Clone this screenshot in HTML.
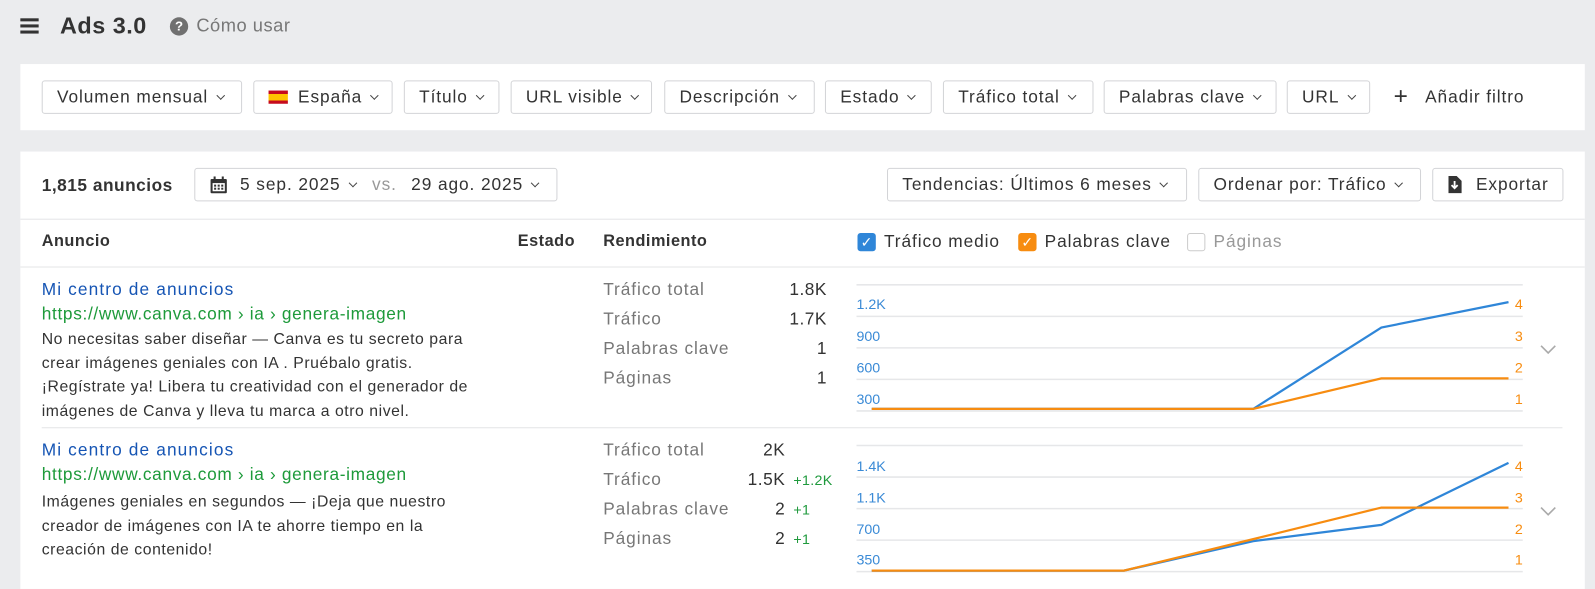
<!DOCTYPE html>
<html><head><meta charset="utf-8"><style>
*{box-sizing:border-box;margin:0;padding:0}
body{width:1595px;height:571px;background:#ebecee;font-family:"Liberation Sans",sans-serif;color:#333;position:relative;overflow:hidden}
#w{position:absolute;left:0;top:0;width:1568px;height:562px;transform:scale(1.0172);transform-origin:0 0}
.a{position:absolute;white-space:nowrap}
.card{position:absolute;background:#fff;left:20px;width:1538px}
.btn{position:absolute;height:33px;border:1px solid #d3d4d7;border-radius:3px;background:#fff;font-size:17px;letter-spacing:0.9px;color:#333;display:flex;align-items:center;padding-left:14px}
.chev{display:inline-block;width:6px;height:6px;border-right:1.5px solid #444;border-bottom:1.5px solid #444;transform:rotate(45deg);margin-left:9px;margin-top:-4px}
.m{font-size:17px;color:#777;letter-spacing:0.9px}
.v{font-size:17px;color:#333;text-align:right;letter-spacing:0.5px}
.g{font-size:14px;color:#1f9a3d;letter-spacing:0.3px}
.t{font-size:17px;color:#1655b4;letter-spacing:1.1px}
.u{font-size:17px;color:#1d9a3a;letter-spacing:0.65px}
.d{font-size:15.5px;color:#333;line-height:23.5px;white-space:normal;width:448px;letter-spacing:0.55px}
.h{font-size:16px;font-weight:bold;color:#333;letter-spacing:0.5px}
</style></head><body><div id="w">
<div class="a" style="left:20px;top:18px;width:18px;height:3px;background:#333;box-shadow:0 6px 0 #333,0 12px 0 #333"></div>
<div class="a" style="left:59px;top:12px;font-size:23px;font-weight:bold;color:#333;letter-spacing:0.5px">Ads 3.0</div>
<div class="a" style="left:167px;top:17px;width:18px;height:18px;border-radius:50%;background:#707070;color:#fff;font-size:13px;font-weight:bold;text-align:center;line-height:18px">?</div>
<div class="a" style="left:193px;top:15px;font-size:18px;color:#777;letter-spacing:0.5px">Cómo usar</div>

<div class="card" style="top:63px;height:65px"></div>
<div class="btn" style="left:41px;top:79px;width:197px">Volumen mensual<span class="chev"></span></div>
<div class="btn" style="left:249px;top:79px;width:137px"><span style="display:inline-block;width:19px;height:13px;background:linear-gradient(#c60b1e 0 25%,#ffc400 25% 75%,#c60b1e 75%);margin-right:10px"></span>España<span class="chev"></span></div>
<div class="btn" style="left:397px;top:79px;width:94px">Título<span class="chev"></span></div>
<div class="btn" style="left:502px;top:79px;width:139px">URL visible<span class="chev"></span></div>
<div class="btn" style="left:653px;top:79px;width:148px">Descripción<span class="chev"></span></div>
<div class="btn" style="left:811px;top:79px;width:105px">Estado<span class="chev"></span></div>
<div class="btn" style="left:927px;top:79px;width:148px">Tráfico total<span class="chev"></span></div>
<div class="btn" style="left:1085px;top:79px;width:170px">Palabras clave<span class="chev"></span></div>
<div class="btn" style="left:1265px;top:79px;width:82px">URL<span class="chev"></span></div>
<div class="a" style="left:1370px;top:83px;font-size:24px;color:#333;line-height:24px">+</div>
<div class="a" style="left:1401px;top:86px;font-size:17px;color:#333;letter-spacing:0.9px">Añadir filtro</div>

<div class="card" style="top:149px;height:430px"></div>
<div class="a" style="left:41px;top:173px;font-size:17px;font-weight:bold;color:#333;letter-spacing:0.5px">1,815 anuncios</div>
<div class="btn" style="left:191px;top:165px;width:357px"><svg width="18" height="18" viewBox="0 0 18 18" style="margin-right:12px"><rect x="1" y="3" width="16" height="14" rx="1" fill="#333"/><rect x="4" y="0.5" width="2" height="4" fill="#333"/><rect x="12" y="0.5" width="2" height="4" fill="#333"/><rect x="3" y="7" width="12" height="8" fill="#fff"/><g fill="#333"><rect x="4.5" y="8.5" width="2" height="2"/><rect x="8" y="8.5" width="2" height="2"/><rect x="11.5" y="8.5" width="2" height="2"/><rect x="4.5" y="11.5" width="2" height="2"/><rect x="8" y="11.5" width="2" height="2"/><rect x="11.5" y="11.5" width="2" height="2"/></g></svg>5 sep. 2025<span class="chev"></span><span style="color:#999;margin:0 14px 0 16px">vs.</span>29 ago. 2025<span class="chev"></span></div>
<div class="btn" style="left:872px;top:165px;width:295px">Tendencias: Últimos 6 meses<span class="chev"></span></div>
<div class="btn" style="left:1178px;top:165px;width:219px">Ordenar por: Tráfico<span class="chev"></span></div>
<div class="btn" style="left:1408px;top:165px;width:129px"><svg width="14" height="17" viewBox="0 0 14 17" style="margin-right:14px"><path d="M1 0h8l5 5v12H1z" fill="#333"/><path d="M7 5v7M4 9l3 3 3-3" stroke="#fff" stroke-width="1.8" fill="none"/></svg>Exportar</div>

<div class="a" style="left:20px;top:215px;width:1538px;height:1px;background:#e4e5e7"></div>
<div class="a h" style="left:41px;top:229px">Anuncio</div>
<div class="a h" style="left:509px;top:229px">Estado</div>
<div class="a h" style="left:593px;top:229px">Rendimiento</div>
<div class="a" style="left:843px;top:229px;width:18px;height:18px;border-radius:3px;background:#2f86d8;color:#fff;font-size:14px;text-align:center;line-height:18px">✓</div>
<div class="a" style="left:869px;top:228px;font-size:17px;color:#333;letter-spacing:0.9px">Tráfico medio</div>
<div class="a" style="left:1001px;top:229px;width:18px;height:18px;border-radius:3px;background:#f78c10;color:#fff;font-size:14px;text-align:center;line-height:18px">✓</div>
<div class="a" style="left:1027px;top:228px;font-size:17px;color:#333;letter-spacing:0.9px">Palabras clave</div>
<div class="a" style="left:1167px;top:229px;width:18px;height:18px;border-radius:3px;border:1px solid #ccc"></div>
<div class="a" style="left:1193px;top:228px;font-size:17px;color:#999;letter-spacing:0.9px">Páginas</div>
<div class="a" style="left:20px;top:262px;width:1538px;height:1px;background:#e4e5e7"></div>

<div class="a t" style="left:41px;top:275px">Mi centro de anuncios</div>
<div class="a u" style="left:41px;top:299px">https://www.canva.com › ia › genera-imagen</div>
<div class="a d" style="left:41px;top:322px">No necesitas saber diseñar — Canva es tu secreto para crear imágenes geniales con IA . Pruébalo gratis. ¡Regístrate ya! Libera tu creatividad con el generador de imágenes de Canva y lleva tu marca a otro nivel.</div>
<div class="a m" style="left:593px;top:275px">Tráfico total</div>
<div class="a m" style="left:593px;top:304px">Tráfico</div>
<div class="a m" style="left:593px;top:333px">Palabras clave</div>
<div class="a m" style="left:593px;top:362px">Páginas</div>
<div class="a v" style="left:713px;width:100px;top:275px">1.8K</div>
<div class="a v" style="left:713px;width:100px;top:304px">1.7K</div>
<div class="a v" style="left:713px;width:100px;top:333px">1</div>
<div class="a v" style="left:713px;width:100px;top:362px">1</div>

<div class="a" style="left:41px;top:420px;width:1495px;height:1px;background:#e4e5e7"></div>
<div class="a t" style="left:41px;top:433px">Mi centro de anuncios</div>
<div class="a u" style="left:41px;top:457px">https://www.canva.com › ia › genera-imagen</div>
<div class="a d" style="left:41px;top:482px;width:430px">Imágenes geniales en segundos — ¡Deja que nuestro creador de imágenes con IA te ahorre tiempo en la creación de contenido!</div>
<div class="a m" style="left:593px;top:433px">Tráfico total</div>
<div class="a m" style="left:593px;top:462px">Tráfico</div>
<div class="a m" style="left:593px;top:491px">Palabras clave</div>
<div class="a m" style="left:593px;top:520px">Páginas</div>
<div class="a v" style="left:672px;width:100px;top:433px">2K</div>
<div class="a v" style="left:672px;width:100px;top:462px">1.5K</div>
<div class="a v" style="left:672px;width:100px;top:491px">2</div>
<div class="a v" style="left:672px;width:100px;top:520px">2</div>
<div class="a g" style="left:780px;top:464px">+1.2K</div>
<div class="a g" style="left:780px;top:493px">+1</div>
<div class="a g" style="left:780px;top:522px">+1</div>

<svg class="a" style="left:0;top:0" width="1595" height="571" font-family="Liberation Sans, sans-serif" font-size="14">
<g stroke="#e6e7e9" stroke-width="1.5">
<line x1="842" y1="280" x2="1497" y2="280"/><line x1="842" y1="311" x2="1497" y2="311"/><line x1="842" y1="342" x2="1497" y2="342"/><line x1="842" y1="373" x2="1497" y2="373"/><line x1="842" y1="404" x2="1497" y2="404"/>
<line x1="842" y1="438" x2="1497" y2="438"/><line x1="842" y1="469" x2="1497" y2="469"/><line x1="842" y1="500" x2="1497" y2="500"/><line x1="842" y1="531" x2="1497" y2="531"/><line x1="842" y1="562" x2="1497" y2="562"/>
</g>
<g fill="#3a8ad6"><text x="842" y="304">1.2K</text><text x="842" y="335">900</text><text x="842" y="366">600</text><text x="842" y="397">300</text>
<text x="842" y="463">1.4K</text><text x="842" y="494">1.1K</text><text x="842" y="525">700</text><text x="842" y="555">350</text></g>
<g fill="#f78c10" text-anchor="end"><text x="1497" y="304">4</text><text x="1497" y="335">3</text><text x="1497" y="366">2</text><text x="1497" y="397">1</text>
<text x="1497" y="463">4</text><text x="1497" y="494">3</text><text x="1497" y="525">2</text><text x="1497" y="555">1</text></g>
<polyline points="857,402 1232,402 1358,322 1483,297" fill="none" stroke="#2f86d8" stroke-width="2.2"/>
<polyline points="857,402 1232,402 1358,372 1483,372" fill="none" stroke="#f78c10" stroke-width="2.2"/>
<polyline points="857,561 1105,561 1232,532 1358,516 1483,455" fill="none" stroke="#2f86d8" stroke-width="2.2"/>
<polyline points="857,561 1105,561 1232,530 1358,499 1483,499" fill="none" stroke="#f78c10" stroke-width="2.2"/>
<polyline points="1515,340 1522,347 1529,340" fill="none" stroke="#aaa" stroke-width="1.6"/>
<polyline points="1515,499 1522,506 1529,499" fill="none" stroke="#aaa" stroke-width="1.6"/>
</svg>
</div></body></html>
